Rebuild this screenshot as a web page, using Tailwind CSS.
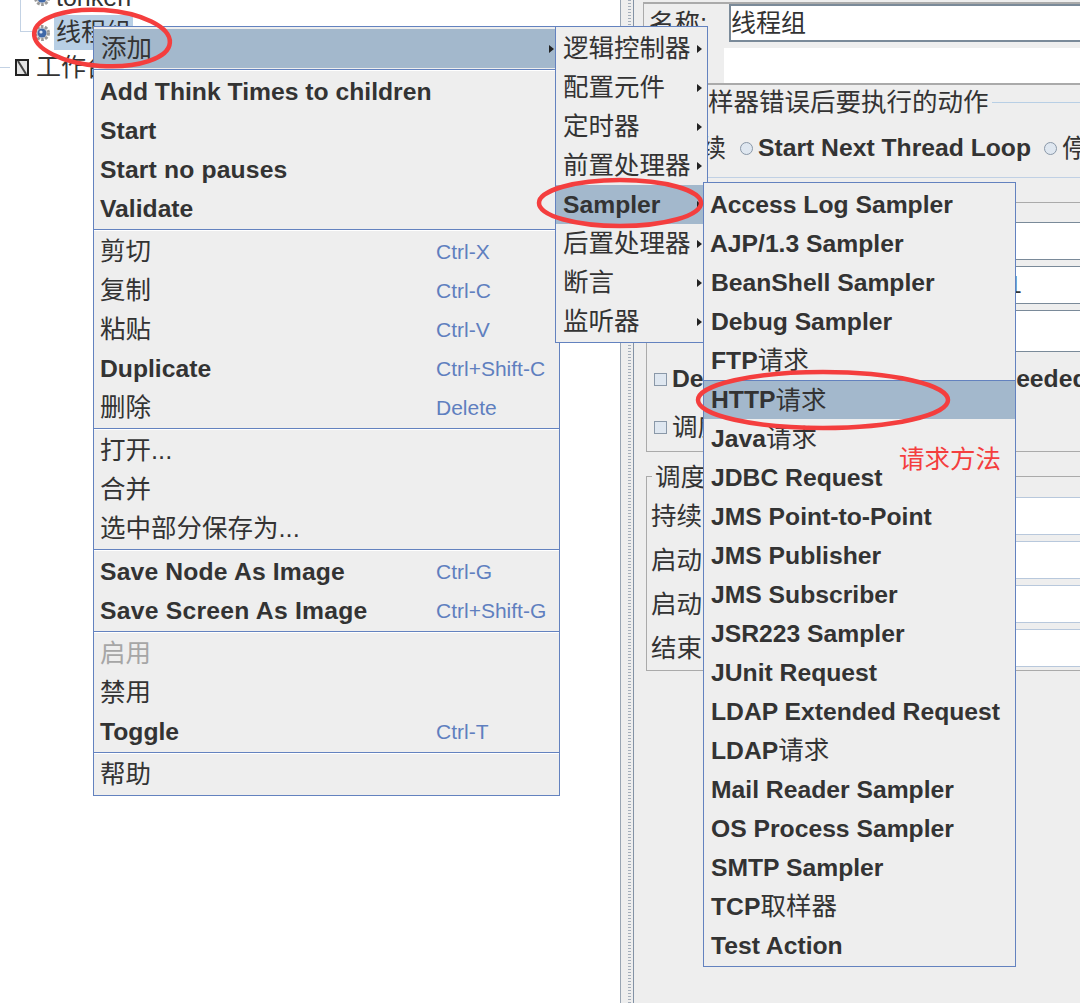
<!DOCTYPE html>
<html lang="en">
<head>
    <meta charset="UTF-8">
    <title>JMeter Menu</title>
    <script src="https://cdn.jsdelivr.net/npm/@tailwindcss/browser@4"></script>
</head>
<body class="bg-white overflow-hidden font-['Liberation_Sans','Noto_Sans_CJK_SC',sans-serif] text-[#333]">
<div class="relative w-[1080px] h-[1003px] flex overflow-hidden">

    <!-- tree -->
    <div class="relative w-[620px] shrink-0 text-[25px] whitespace-nowrap">
        <div class="absolute left-[20px] top-0 w-[13px] h-[32px] border-l border-b border-[#c3d2e4]"></div>
        <div class="absolute left-0 top-[67px] w-[10px] h-px bg-[#c3d2e4]"></div>
        <div class="-mt-[20px] h-[35px] pl-[33px] flex items-center">
            <svg class="w-[18px] h-[18px]" viewBox="0 0 18 18"><circle cx="9" cy="9" r="6.5" fill="#ddd" stroke="#999" stroke-width="3" stroke-dasharray="2.6 1.5"/><circle cx="9" cy="9" r="4.5" fill="#3f68a8"/><circle cx="8" cy="8" r="1.6" fill="#dbe6f5"/></svg>
            <span class="ml-[5px]">tonken</span>
        </div>
        <div class="h-[35px] pl-[33px] flex items-center">
            <svg class="w-[18px] h-[18px]" viewBox="0 0 18 18"><circle cx="9" cy="9" r="6.5" fill="#ddd" stroke="#999" stroke-width="3" stroke-dasharray="2.6 1.5"/><circle cx="9" cy="9" r="4.5" fill="#3f68a8"/><circle cx="8" cy="8" r="1.6" fill="#dbe6f5"/></svg>
            <span class="ml-[3px] bg-[#b8cfe5] px-[2px] w-[79px] h-[35px] leading-[35px]">线程组</span>
        </div>
        <div class="h-[35px] pl-[14px] flex items-center">
            <svg class="w-[17px] h-[19px]" viewBox="0 0 17 19"><rect x="2" y="2" width="12" height="15" fill="#e4e4e4" stroke="#222" stroke-width="2"/><path d="M4 3l8 13" stroke="#444" stroke-width="2"/></svg>
            <span class="ml-[5px]">工作台</span>
        </div>
    </div>

    <!-- splitter -->
    <div class="w-[14px] shrink-0 bg-[#eeeeee] border-l border-[#98a4b2] flex justify-end">
        <div class="w-[3px] mr-[2px] bg-[repeating-linear-gradient(to_bottom,#a4aeba_0,#a4aeba_1px,transparent_1px,transparent_3px)]"></div>
        <div class="w-[3px] -mr-[2px] bg-[#8392a5]"></div>
    </div>

    <!-- right panel -->
    <div class="flex-1 bg-[#eeeeee] text-[25.5px] whitespace-nowrap">
        <div class="ml-[9px] mt-[2px] h-[46px] border-t-2 border-l border-[#aaaaaa] flex items-start">
            <span class="w-[85px] h-[38px] pl-[5px] leading-[38px]">名称:</span>
            <div class="flex-1 h-[38px] bg-white border-2 border-[#7a8a99] leading-[34px] text-[25px]">线程组</div>
        </div>
        <div class="ml-[90px] h-[35px] bg-white"></div>

        <div class="border-t-2 border-[#aaaaaa] pl-[74px]">
            <div class="flex items-center h-[34px]">
                <span>样器错误后要执行的动作</span>
                <span class="flex-1 h-px bg-[#b8cfe5] ml-[3px]"></span>
            </div>
            <div class="flex items-center h-[58px]">
                <span class="w-[32px] pr-[14px] overflow-hidden flex justify-end">续</span>
                <span class="w-[13px] h-[13px] rounded-full border border-[#8a98a8] bg-[#dfe7f0]"></span>
                <span class="ml-[5px] font-bold text-[24.7px]">Start Next Thread Loop</span>
                <span class="ml-[13px] w-[13px] h-[13px] rounded-full border border-[#8a98a8] bg-[#dfe7f0]"></span>
                <span class="ml-[5px]">停</span>
            </div>
            <div class="h-px bg-[#c0d0e4]"></div>
        </div>

        <!-- thread properties -->
        <div class="ml-[12px] mt-[24px] h-[250px] border-y border-l border-[#aaaaaa]">
            <div class="ml-[77px] mt-[19px] h-[38px] bg-white border-y border-[#7a8a99]"></div>
            <div class="ml-[77px] mt-[6px] h-[38px] bg-white border-y border-[#7a8a99] pl-[284px] leading-[36px] text-[24.7px]">1</div>
            <div class="ml-[77px] mt-[6px] h-[42px] bg-white border-y border-[#7a8a99]"></div>
            <div class="h-[54px] pl-[7px] flex items-center">
                <span class="w-[13px] h-[13px] border border-[#8a98a8] bg-[#dfe7f0]"></span>
                <span class="ml-[5px] font-bold text-[24.7px]">De</span>
                <span class="ml-auto font-bold text-[24.7px]">eeded</span>
            </div>
            <div class="h-[42px] pl-[7px] flex items-center">
                <span class="w-[13px] h-[13px] border border-[#8a98a8] bg-[#dfe7f0]"></span>
                <span class="ml-[5px]">调度</span>
            </div>
        </div>

        <!-- scheduler -->
        <div class="relative ml-[12px] mt-[24px] h-[195px] border-y border-l border-[#aaaaaa] pt-[20px]">
            <span class="absolute left-[5px] -top-[18px] h-[36px] leading-[36px] px-[3px] bg-[#eeeeee]">调度</span>
            <div class="h-[38px] flex">
                <span class="w-[77px] pl-[4px] leading-[38px]">持续</span>
                <div class="flex-1 bg-white border-y border-[#b8c8dc]"></div>
            </div>
            <div class="h-[38px] mt-[6px] flex">
                <span class="w-[77px] pl-[4px] leading-[38px]">启动</span>
                <div class="flex-1 bg-white border-y border-[#b8c8dc]"></div>
            </div>
            <div class="h-[38px] mt-[6px] flex">
                <span class="w-[77px] pl-[4px] leading-[38px]">启动</span>
                <div class="flex-1 bg-white border-y border-[#b8c8dc]"></div>
            </div>
            <div class="h-[38px] mt-[6px] flex">
                <span class="w-[77px] pl-[4px] leading-[38px]">结束</span>
                <div class="flex-1 bg-white border-y border-[#b8c8dc]"></div>
            </div>
        </div>
    </div>

    <!-- context menu -->
    <div class="absolute left-[93px] top-[26px] w-[467px] bg-[#eeeeee] border border-[#6382bf] pt-[2px] pb-[1px] whitespace-nowrap text-[24.7px] font-bold z-10">
        <div class="h-[39px] pl-[7px] pr-[5px] flex items-center bg-[#a3b8cc] font-normal text-[25.5px]">添加<span class="ml-auto border-y-[4px] border-y-transparent border-l-[5px] border-l-[#222]"></span></div>
        <div class="my-[1px] h-[2px] border-y border-t-[#6382bf] border-b-white"></div>
        <div class="h-[39px] pl-[6px] flex items-center">Add Think Times to children</div>
        <div class="h-[39px] pl-[6px] flex items-center">Start</div>
        <div class="h-[39px] pl-[6px] flex items-center tracking-[0.15px]">Start no pauses</div>
        <div class="h-[39px] pl-[6px] flex items-center">Validate</div>
        <div class="my-[1px] h-[2px] border-y border-t-[#6382bf] border-b-white"></div>
        <div class="h-[39px] pl-[6px] flex items-center font-normal"><span class="w-[336px] text-[25.5px]">剪切</span><span class="text-[21px] text-[#5f7fbf]">Ctrl-X</span></div>
        <div class="h-[39px] pl-[6px] flex items-center font-normal"><span class="w-[336px] text-[25.5px]">复制</span><span class="text-[21px] text-[#5f7fbf]">Ctrl-C</span></div>
        <div class="h-[39px] pl-[6px] flex items-center font-normal"><span class="w-[336px] text-[25.5px]">粘贴</span><span class="text-[21px] text-[#5f7fbf]">Ctrl-V</span></div>
        <div class="h-[39px] pl-[6px] flex items-center font-normal"><span class="w-[336px] font-bold">Duplicate</span><span class="text-[21px] text-[#5f7fbf]">Ctrl+Shift-C</span></div>
        <div class="h-[39px] pl-[6px] flex items-center font-normal"><span class="w-[336px] text-[25.5px]">删除</span><span class="text-[21px] text-[#5f7fbf]">Delete</span></div>
        <div class="my-[1px] h-[2px] border-y border-t-[#6382bf] border-b-white"></div>
        <div class="h-[39px] pl-[6px] flex items-center font-normal text-[25.5px]">打开...</div>
        <div class="h-[39px] pl-[6px] flex items-center font-normal text-[25.5px]">合并</div>
        <div class="h-[39px] pl-[6px] flex items-center font-normal text-[25.5px]">选中部分保存为...</div>
        <div class="my-[1px] h-[2px] border-y border-t-[#6382bf] border-b-white"></div>
        <div class="h-[39px] pl-[6px] flex items-center font-normal"><span class="w-[336px] font-bold tracking-[0.17px]">Save Node As Image</span><span class="text-[21px] text-[#5f7fbf]">Ctrl-G</span></div>
        <div class="h-[39px] pl-[6px] flex items-center font-normal"><span class="w-[336px] font-bold tracking-[0.25px]">Save Screen As Image</span><span class="text-[21px] text-[#5f7fbf]">Ctrl+Shift-G</span></div>
        <div class="my-[1px] h-[2px] border-y border-t-[#6382bf] border-b-white"></div>
        <div class="h-[39px] pl-[6px] flex items-center font-normal text-[25.5px] text-[#a6a6a6]">启用</div>
        <div class="h-[39px] pl-[6px] flex items-center font-normal text-[25.5px]">禁用</div>
        <div class="h-[39px] pl-[6px] flex items-center font-normal"><span class="w-[336px] font-bold">Toggle</span><span class="text-[21px] text-[#5f7fbf]">Ctrl-T</span></div>
        <div class="my-[1px] h-[2px] border-y border-t-[#6382bf] border-b-white"></div>
        <div class="h-[39px] pl-[6px] flex items-center font-normal text-[25.5px]">帮助</div>
    </div>

    <!-- add submenu -->
    <div class="absolute left-[555px] top-[26px] w-[153px] bg-[#eeeeee] border border-[#6382bf] pt-[2px] pb-[1px] whitespace-nowrap text-[25.5px] z-20">
        <div class="h-[39px] pl-[7px] pr-[5px] flex items-center">逻辑控制器<span class="ml-auto border-y-[4px] border-y-transparent border-l-[5px] border-l-[#222]"></span></div>
        <div class="h-[39px] pl-[7px] pr-[5px] flex items-center">配置元件<span class="ml-auto border-y-[4px] border-y-transparent border-l-[5px] border-l-[#222]"></span></div>
        <div class="h-[39px] pl-[7px] pr-[5px] flex items-center">定时器<span class="ml-auto border-y-[4px] border-y-transparent border-l-[5px] border-l-[#222]"></span></div>
        <div class="h-[39px] pl-[7px] pr-[5px] flex items-center">前置处理器<span class="ml-auto border-y-[4px] border-y-transparent border-l-[5px] border-l-[#222]"></span></div>
        <div class="h-[39px] pl-[7px] pr-[5px] flex items-center bg-[#a3b8cc] font-bold text-[24.7px]">Sampler<span class="ml-auto border-y-[4px] border-y-transparent border-l-[5px] border-l-[#222]"></span></div>
        <div class="h-[39px] pl-[7px] pr-[5px] flex items-center">后置处理器<span class="ml-auto border-y-[4px] border-y-transparent border-l-[5px] border-l-[#222]"></span></div>
        <div class="h-[39px] pl-[7px] pr-[5px] flex items-center">断言<span class="ml-auto border-y-[4px] border-y-transparent border-l-[5px] border-l-[#222]"></span></div>
        <div class="h-[39px] pl-[7px] pr-[5px] flex items-center">监听器<span class="ml-auto border-y-[4px] border-y-transparent border-l-[5px] border-l-[#222]"></span></div>
    </div>

    <!-- sampler submenu -->
    <div class="absolute left-[703px] top-[182px] w-[313px] bg-[#eeeeee] border border-[#6382bf] pt-[2px] pb-[1px] whitespace-nowrap text-[24.7px] font-bold z-30">
        <div class="h-[39px] pl-[6px] flex items-center">Access Log Sampler</div>
        <div class="h-[39px] pl-[6px] flex items-center">AJP/1.3 Sampler</div>
        <div class="h-[39px] pl-[7px] flex items-center">BeanShell Sampler</div>
        <div class="h-[39px] pl-[7px] flex items-center">Debug Sampler</div>
        <div class="h-[39px] pl-[7px] flex items-center">FTP<span class="font-normal text-[25.5px]">请求</span></div>
        <div class="h-[39px] pl-[7px] flex items-center bg-[#a3b8cc] border-t border-[#6382bf]">HTTP<span class="font-normal text-[25.5px]">请求</span></div>
        <div class="h-[39px] pl-[7px] flex items-center">Java<span class="font-normal text-[25.5px]">请求</span></div>
        <div class="h-[39px] pl-[7px] flex items-center">JDBC Request</div>
        <div class="h-[39px] pl-[7px] flex items-center">JMS Point-to-Point</div>
        <div class="h-[39px] pl-[7px] flex items-center">JMS Publisher</div>
        <div class="h-[39px] pl-[7px] flex items-center">JMS Subscriber</div>
        <div class="h-[39px] pl-[7px] flex items-center">JSR223 Sampler</div>
        <div class="h-[39px] pl-[7px] flex items-center">JUnit Request</div>
        <div class="h-[39px] pl-[7px] flex items-center">LDAP Extended Request</div>
        <div class="h-[39px] pl-[7px] flex items-center">LDAP<span class="font-normal text-[25.5px]">请求</span></div>
        <div class="h-[39px] pl-[7px] flex items-center">Mail Reader Sampler</div>
        <div class="h-[39px] pl-[7px] flex items-center">OS Process Sampler</div>
        <div class="h-[39px] pl-[7px] flex items-center">SMTP Sampler</div>
        <div class="h-[39px] pl-[7px] flex items-center">TCP<span class="font-normal text-[25.5px]">取样器</span></div>
        <div class="h-[39px] pl-[7px] flex items-center">Test Action</div>
    </div>

    <!-- annotations -->
    <svg class="absolute inset-0 z-40 pointer-events-none" width="1080" height="1003" viewBox="0 0 1080 1003" fill="none" stroke="#f43e3e" stroke-width="4.5">
        <ellipse cx="102" cy="38" rx="68" ry="28" transform="rotate(4 102 38)"/>
        <ellipse cx="620" cy="203" rx="81" ry="23"/>
        <ellipse cx="823" cy="400" rx="125" ry="28"/>
    </svg>
    <span class="absolute left-[899px] top-[443px] z-40 text-[25.5px] leading-[32px] text-[#f43e3e]">请求方法</span>
</div>
</body>
</html>
